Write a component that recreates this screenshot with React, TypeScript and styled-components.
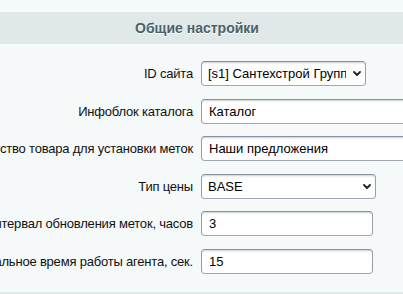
import React from "react";
import styled, { createGlobalStyle } from "styled-components";

const Global = createGlobalStyle`
  html, body {
    margin: 0;
    padding: 0;
    background: #f5f9f9;
    overflow: hidden;
  }
  body {
    font-family: "Liberation Sans", Arial, sans-serif;
    font-size: 13px;
    color: #000;
  }
`;

const Page = styled.div`
  width: 403px;
  height: 294px;
  overflow: hidden;
  padding-top: 12px;
  box-sizing: border-box;
  background: #f5f9f9;
`;

const Heading = styled.div`
  height: 32px;
  background: #e0e8ea;
  display: flex;
  align-items: center;
  justify-content: center;
  padding-right: 9px;
  color: #4b6267;
  font-size: 14px;
  font-weight: bold;
  text-shadow: 0 1px #fff;
`;

const Form = styled.div`
  display: grid;
  grid-template-columns: 193px 1fr;
  column-gap: 8px;
  row-gap: 12.5px;
  padding: 17px 0 18px;
`;

const Label = styled.label`
  display: flex;
  justify-content: flex-end;
  align-items: center;
  white-space: nowrap;
  height: 25px;
  color: #111;
  letter-spacing: -0.2px;
  min-width: 0;
`;

const Field = styled.div`
  display: flex;
  align-items: center;
  height: 25px;
  min-width: 0;
`;

const fieldBase = `
  box-sizing: border-box;
  height: 25px;
  margin: 0;
  border: 1px solid;
  border-color: #87919c #959ea9 #9ea7b1 #959ea9;
  border-radius: 4px;
  background: #fff;
  box-shadow: 0 1px 0 0 rgba(255,255,255,.3), inset 0 2px 2px -1px rgba(180,188,191,.7);
  font-family: "Liberation Sans", Arial, sans-serif;
  font-size: 13px;
  color: #000;
  outline: none;
`;

const TextInput = styled.input<{ $w: number }>`
  ${fieldBase}
  width: ${(p) => p.$w}px;
  padding: 0 6px 0 7px;
  flex-shrink: 0;
`;

const SelectWrap = styled.div<{ $w: number }>`
  position: relative;
  width: ${(p) => p.$w}px;
  height: 25px;
  flex-shrink: 0;
`;

const Select = styled.select`
  ${fieldBase}
  width: 100%;
  appearance: none;
  -webkit-appearance: none;
  padding: 0 19px 0 6px;
`;

const Chevron = styled.svg`
  position: absolute;
  right: 5px;
  top: 10px;
  width: 8px;
  height: 5px;
  pointer-events: none;
`;

const BottomBand = styled.div`
  height: 20px;
  background: #e0e8ea;
`;

type Row =
  | { label: string; kind: "select"; value: string; width: number }
  | { label: string; kind: "input"; value: string; width: number };

const rows: Row[] = [
  { label: "ID сайта", kind: "select", value: "[s1] Сантехстрой Группа", width: 165 },
  { label: "Инфоблок каталога", kind: "input", value: "Каталог", width: 260 },
  { label: "Свойство товара для установки меток", kind: "input", value: "Наши предложения", width: 260 },
  { label: "Тип цены", kind: "select", value: "BASE", width: 175 },
  { label: "Интервал обновления меток, часов", kind: "input", value: "3", width: 172 },
  { label: "Максимальное время работы агента, сек.", kind: "input", value: "15", width: 172 },
];

export default function App() {
  return (
    <>
      <Global />
      <Page>
        <Heading>Общие настройки</Heading>
        <Form>
          {rows.map((r, i) => (
            <React.Fragment key={i}>
              <Label>{r.label}</Label>
              <Field>
                {r.kind === "select" ? (
                  <SelectWrap $w={r.width}>
                    <Select defaultValue={r.value}>
                      <option value={r.value}>{r.value}</option>
                    </Select>
                    <Chevron viewBox="0 0 8 5">
                      <path d="M1 1 L4 4 L7 1" fill="none" stroke="#222" strokeWidth="1.8" strokeLinecap="round" strokeLinejoin="round" />
                    </Chevron>
                  </SelectWrap>
                ) : (
                  <TextInput $w={r.width} defaultValue={r.value} />
                )}
              </Field>
            </React.Fragment>
          ))}
        </Form>
        <BottomBand />
      </Page>
    </>
  );
}
